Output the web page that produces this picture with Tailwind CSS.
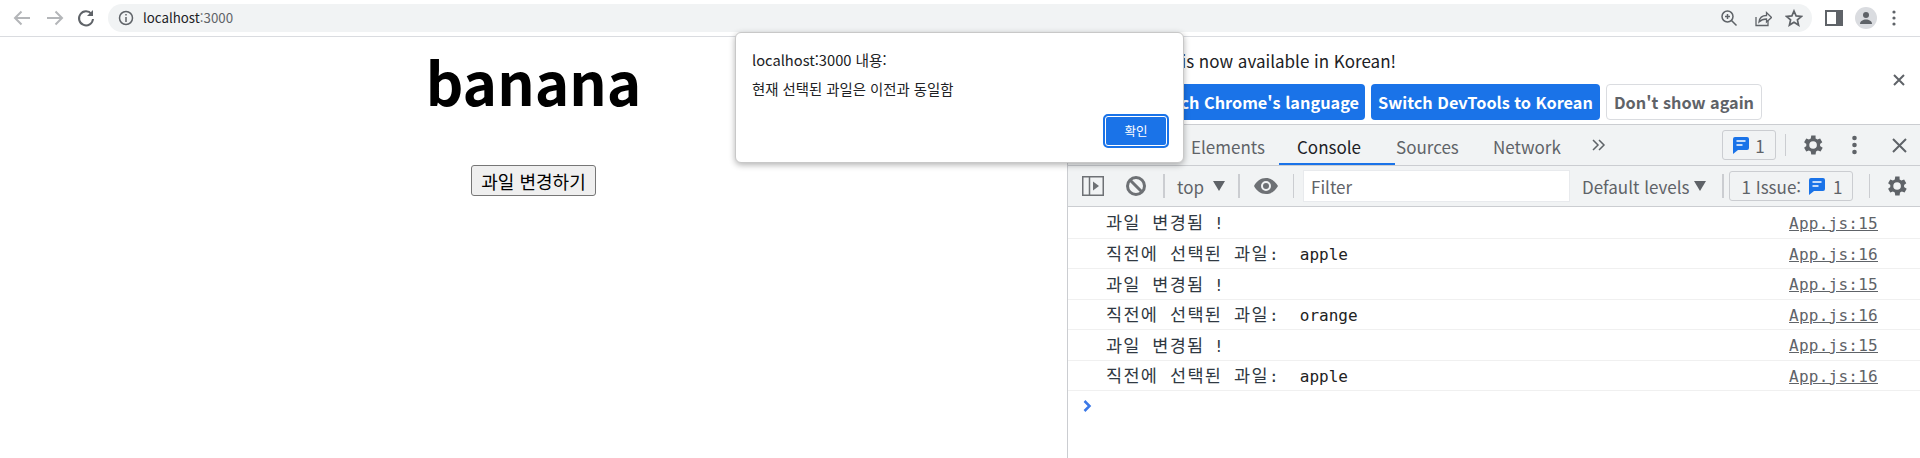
<!DOCTYPE html>
<html lang="ko">
<head>
    <meta charset="UTF-8">
    <title>localhost:3000</title>
    <script src="https://cdn.jsdelivr.net/npm/@tailwindcss/browser@4"></script>
</head>
<body class="relative w-[1920px] h-[458px] overflow-hidden bg-white font-['Noto_Sans_CJK_KR','Noto_Sans',sans-serif]">
    <!-- Browser toolbar -->
    <header class="flex items-center h-[37px] border-b border-[#dadce0] bg-white">
        <svg class="ml-[12px] w-[20px] h-[20px]" viewBox="0 0 20 20" fill="none" stroke="#b4b6b9" stroke-width="2"><path d="M18 10H3M9.500 3.500 3 10l6.500 6.500"/></svg>
        <svg class="ml-[13px] w-[20px] h-[20px]" viewBox="0 0 20 20" fill="none" stroke="#b4b6b9" stroke-width="2"><path d="M2 10h15M10.500 3.500 17 10l-6.500 6.500"/></svg>
        <svg class="ml-[11px] w-[20px] h-[20px]" viewBox="0 0 20 20" fill="none" stroke="#5f6368" stroke-width="2"><path d="M15.500 6A7 7 0 1 0 17 11"/><path d="M17 2v6h-6" fill="#5f6368" stroke="none"/></svg>
        <div class="ml-[12px] flex items-center w-[1704px] h-[28px] rounded-full bg-[#f1f3f4]">
            <svg class="ml-[10px] w-[16px] h-[16px]" viewBox="0 0 16 16" fill="none" stroke="#5f6368" stroke-width="1.500"><circle cx="8" cy="8" r="6.500"/><path d="M8 7v5"/><path d="M8 4v1.600"/></svg>
            <span class="ml-[9px] text-[13.300px] text-[#202124]">localhost<span class="text-[#5f6368]">:3000</span></span>
            <svg class="ml-auto w-[18px] h-[18px]" viewBox="0 0 18 18" fill="none" stroke="#5f6368" stroke-width="1.500"><circle cx="7.500" cy="7.500" r="5.500"/><path d="m11.500 11.500 5 5M5 7.500h5M7.500 5v5"/></svg>
            <svg class="ml-[16px] w-[18px] h-[18px]" viewBox="0 0 18 18" fill="none" stroke="#5f6368" stroke-width="1.300"><path d="M2 8v8.500h12V12"/><path d="M5 13c.5-4 3.500-6.500 7.500-6.500V3.500l5 5-5 4.500V10c-3 0-5.500 1-7.500 3Z"/></svg>
            <svg class="ml-[13px] mr-[9px] w-[18px] h-[18px]" viewBox="0 0 18 18" fill="none" stroke="#5f6368" stroke-width="1.700"><path d="m9 2 2.100 4.900 5.300.5-4 3.500 1.200 5.200L9 13.300l-4.600 2.800 1.200-5.200-4-3.500 5.300-.5Z"/></svg>
        </div>
        <svg class="ml-[13px] w-[18px] h-[16px]" viewBox="0 0 18 16"><rect width="18" height="16" fill="#5f6368"/><rect x="2" y="2" width="9" height="12" fill="#fff"/></svg>
        <div class="ml-[12px] flex items-center justify-center w-[22px] h-[22px] rounded-full bg-[#dadce0]">
            <svg class="w-[14px] h-[14px]" viewBox="0 0 14 14" fill="#5f6368"><circle cx="7" cy="4" r="3"/><path d="M1 13c0-3 3-4.500 6-4.500s6 1.500 6 4.500Z"/></svg>
        </div>
        <svg class="ml-[15px] w-[4px] h-[16px]" viewBox="0 0 4 16" fill="#5f6368"><circle cx="2" cy="2" r="1.600"/><circle cx="2" cy="8" r="1.600"/><circle cx="2" cy="14" r="1.600"/></svg>
    </header>

    <div class="flex h-[421px]">
        <!-- Page -->
        <main class="flex flex-col items-center w-[1068px] border-r border-[#cbcdd1] bg-white">
            <h1 class="mt-[2px] text-[58.500px] leading-[84px] font-bold text-black">banana</h1>
            <button class="mt-[42px] w-[125px] h-[31px] rounded-[3px] border border-[#767676] bg-[#efefef] text-[18px] leading-[26px] text-black">과일 변경하기</button>
        </main>

        <!-- DevTools -->
        <section class="flex-1 flex flex-col min-w-0">
            <div class="relative h-[88px] border-b border-[#cbcdd1] overflow-hidden">
                <p class="absolute right-[524px] top-[11px] text-[17px] leading-[26px] whitespace-nowrap text-[#202124]">DevTools is now available in Korean!</p>
                <div class="absolute right-[158px] top-[47px] flex gap-[6px] text-[16.300px] font-semibold whitespace-nowrap">
                    <span class="flex items-center justify-center px-[6px] pt-[1px] h-[36px] rounded-[4px] bg-[#1a73e8] text-white">Switch Chrome's language</span>
                    <span class="flex items-center justify-center w-[229px] pt-[1px] h-[36px] rounded-[4px] bg-[#1a73e8] text-white">Switch DevTools to Korean</span>
                    <span class="flex items-center justify-center w-[156px] pt-[1px] h-[36px] rounded-[4px] border border-[#dadce0] bg-white text-[#5f6368]">Don't show again</span>
                </div>
                <svg class="absolute right-[15px] top-[37px] w-[12px] h-[12px]" viewBox="0 0 12 12" stroke="#5f6368" stroke-width="2"><path d="m1 1 10 10M11 1 1 11"/></svg>
            </div>

            <!-- Tabs -->
            <div class="flex items-center h-[41px] pl-[123px] border-b border-[#cbcdd1] bg-[#f1f3f4] text-[17px] text-[#5f6368]">
                <span class="w-[106px] mt-[3px]">Elements</span>
                <span class="relative w-[99px] pt-[3px] leading-[37px] text-[#202124]">Console<span class="absolute left-[-18px] right-[1px] bottom-[0px] h-[2px] bg-[#1a73e8]"></span></span>
                <span class="w-[97px] mt-[3px]">Sources</span>
                <span class="w-[99px] mt-[3px]">Network</span>
                <svg class="w-[14px] h-[12px]" viewBox="0 0 14 12" fill="none" stroke="#5f6368" stroke-width="1.500"><path d="m1 1 5 5-5 5M7 1l5 5-5 5"/></svg>
                <div class="ml-[116px] flex items-center justify-center gap-[6px] w-[54px] h-[30px] rounded-[3px] border border-[#cbcdd1] text-[#5f6368]">
                    <svg class="w-[16px] h-[18px]" viewBox="0 0 16 18"><path d="M2 1h12a2 2 0 0 1 2 2v9a2 2 0 0 1-2 2H5l-5 4V3a2 2 0 0 1 2-2Z" fill="#1a73e8"/><path d="M3.500 5h9M3.500 9h6" stroke="#fff" stroke-width="1.500"/></svg>
                    <span class="mt-[2px]">1</span>
                </div>
                <span class="ml-[9px] w-px h-[22px] bg-[#cbcdd1]"></span>
                <svg class="ml-[13px] w-[26px] h-[26px]" viewBox="0 0 24 24" fill="#5f6368"><path d="M19.400 13c.1-.3.1-.7.1-1s0-.7-.1-1l2.100-1.600-2-3.500-2.500 1c-.5-.4-1.100-.7-1.700-1L15.300 3.300h-4l-.4 2.600c-.6.300-1.200.6-1.700 1l-2.500-1-2 3.500L6.800 11c-.1.3-.1.700-.1 1s0 .7.1 1l-2.100 1.600 2 3.500 2.500-1c.5.4 1.100.7 1.700 1l.4 2.600h4l.4-2.600c.6-.3 1.200-.6 1.700-1l2.500 1 2-3.500ZM13 15.500a3.500 3.500 0 1 1 0-7 3.500 3.500 0 0 1 0 7Z"/></svg>
                <svg class="ml-[27px] w-[5px] h-[20px]" viewBox="0 0 5 20" fill="#5f6368"><circle cx="2.500" cy="3" r="2.300"/><circle cx="2.500" cy="10" r="2.300"/><circle cx="2.500" cy="17" r="2.300"/></svg>
                <svg class="ml-[35px] w-[15px] h-[15px]" viewBox="0 0 15 15" stroke="#5f6368" stroke-width="2"><path d="m1 1 13 13M14 1 1 14"/></svg>
            </div>

            <!-- Console toolbar -->
            <div class="flex items-center h-[41px] border-b border-[#cbcdd1] bg-[#f1f3f4] text-[17px] text-[#5f6368]">
                <svg class="ml-[14px] w-[22px] h-[20px]" viewBox="0 0 22 20" fill="none" stroke="#6e7175" stroke-width="1.500"><rect x=".75" y=".75" width="20.500" height="18.500"/><path d="M7.500 1v18"/><path d="M11 5.500v9l6-4.500Z" fill="#6e7175" stroke="none"/></svg>
                <svg class="ml-[21px] w-[22px] h-[22px]" viewBox="0 0 22 22" fill="none" stroke="#6e7175" stroke-width="3"><circle cx="11" cy="11" r="8.500"/><path d="m5 5 12 12"/></svg>
                <span class="ml-[16px] w-[2px] h-[24px] bg-[#cbcdd1]"></span>
                <span class="ml-[12px] mt-[2px] w-[27px]">top</span>
                <svg class="ml-[9px] w-[12px] h-[10px]" viewBox="0 0 12 10" fill="#5f6368"><path d="M0 0h12L6 10Z"/></svg>
                <span class="ml-[13px] w-[2px] h-[24px] bg-[#cbcdd1]"></span>
                <svg class="ml-[14px] w-[24px] h-[16px]" viewBox="0 0 24 16" fill="#6e7175"><path d="M12 0C6.500 0 2.500 3.500 0 8c2.500 4.500 6.500 8 12 8s9.500-3.500 12-8c-2.500-4.500-6.500-8-12-8Zm0 13a5 5 0 1 1 0-10 5 5 0 0 1 0 10Z"/><circle cx="12" cy="8" r="3"/></svg>
                <span class="ml-[15px] w-px h-[24px] bg-[#cbcdd1]"></span>
                <div class="ml-[10px] flex items-center w-[265px] h-[30px] pl-[7px] pt-[2px] bg-white shadow-[0_0_0_1px_#e8eaed]">Filter</div>
                <span class="ml-[13px] mt-[2px] w-[106px] whitespace-nowrap">Default levels</span>
                <svg class="ml-[6px] w-[12px] h-[10px]" viewBox="0 0 12 10" fill="#5f6368"><path d="M0 0h12L6 10Z"/></svg>
                <span class="ml-[16px] w-[2px] h-[24px] bg-[#cbcdd1]"></span>
                <div class="ml-[5px] flex items-center justify-center gap-[8px] w-[124px] h-[30px] pl-[2px] rounded-[3px] border border-[#cbcdd1]">
                    <span class="mt-[2px]">1 Issue:</span>
                    <svg class="w-[16px] h-[18px]" viewBox="0 0 16 18"><path d="M2 1h12a2 2 0 0 1 2 2v9a2 2 0 0 1-2 2H5l-5 4V3a2 2 0 0 1 2-2Z" fill="#1a73e8"/><path d="M3.500 5h9M3.500 9h6" stroke="#fff" stroke-width="1.500"/></svg>
                    <span class="mt-[2px]">1</span>
                </div>
                <span class="ml-[16px] w-px h-[24px] bg-[#cbcdd1]"></span>
                <svg class="ml-[13px] w-[26px] h-[26px]" viewBox="0 0 24 24" fill="#5f6368"><path d="M19.400 13c.1-.3.1-.7.1-1s0-.7-.1-1l2.100-1.600-2-3.500-2.500 1c-.5-.4-1.100-.7-1.700-1L15.300 3.300h-4l-.4 2.600c-.6.300-1.200.6-1.700 1l-2.500-1-2 3.500L6.800 11c-.1.3-.1.700-.1 1s0 .7.1 1l-2.100 1.600 2 3.500 2.500-1c.5.4 1.100.7 1.700 1l.4 2.600h4l.4-2.600c.6-.3 1.200-.6 1.700-1l2.500 1 2-3.500ZM13 15.500a3.500 3.500 0 1 1 0-7 3.500 3.500 0 0 1 0 7Z"/></svg>
            </div>

            <!-- Console messages -->
            <div class="flex-1 font-['DejaVu_Sans_Mono','Noto_Sans_CJK_KR',monospace] text-[16px] text-[#303942]">
                <div class="flex items-center justify-between h-[32px] pt-[2px] pl-[38px] pr-[42px] border-b border-[#f0f0f0]"><span class="whitespace-pre"><span class="text-[17.500px] tracking-[1.200px]">과일 변경됨</span> !</span><a class="text-[#5f6368] underline tracking-[0.250px]">App.js:15</a></div>
                <div class="flex items-center justify-between h-[30px] pt-[2px] pl-[38px] pr-[42px] border-b border-[#f0f0f0]"><span class="whitespace-pre"><span class="text-[17.500px] tracking-[1.300px]">직전에 선택된 과일</span>:  <span class="ml-[2px] text-[#222]">apple</span></span><a class="text-[#5f6368] underline tracking-[0.250px]">App.js:16</a></div>
                <div class="flex items-center justify-between h-[31px] pt-[2px] pl-[38px] pr-[42px] border-b border-[#f0f0f0]"><span class="whitespace-pre"><span class="text-[17.500px] tracking-[1.200px]">과일 변경됨</span> !</span><a class="text-[#5f6368] underline tracking-[0.250px]">App.js:15</a></div>
                <div class="flex items-center justify-between h-[30px] pt-[2px] pl-[38px] pr-[42px] border-b border-[#f0f0f0]"><span class="whitespace-pre"><span class="text-[17.500px] tracking-[1.300px]">직전에 선택된 과일</span>:  <span class="ml-[2px] text-[#222]">orange</span></span><a class="text-[#5f6368] underline tracking-[0.250px]">App.js:16</a></div>
                <div class="flex items-center justify-between h-[31px] pt-[2px] pl-[38px] pr-[42px] border-b border-[#f0f0f0]"><span class="whitespace-pre"><span class="text-[17.500px] tracking-[1.200px]">과일 변경됨</span> !</span><a class="text-[#5f6368] underline tracking-[0.250px]">App.js:15</a></div>
                <div class="flex items-center justify-between h-[30px] pt-[2px] pl-[38px] pr-[42px] border-b border-[#f0f0f0]"><span class="whitespace-pre"><span class="text-[17.500px] tracking-[1.300px]">직전에 선택된 과일</span>:  <span class="ml-[2px] text-[#222]">apple</span></span><a class="text-[#5f6368] underline tracking-[0.250px]">App.js:16</a></div>
                <div class="flex items-center h-[30px] pl-[15px]">
                    <svg class="w-[9px] h-[12px]" viewBox="0 0 9 12" fill="none" stroke="#3b78e7" stroke-width="2.500"><path d="m1.500 1 5 5-5 5"/></svg>
                </div>
            </div>
        </section>
    </div>

    <!-- alert dialog -->
    <div class="absolute left-[735px] top-[32px] w-[449px] h-[131px] rounded-[6px] border border-[#c8c8c8] bg-white shadow-[0_2px_6px_rgba(0,0,0,0.3)]">
        <p class="mt-[17px] ml-[16px] text-[14.700px] leading-[20px] text-[#202124]">localhost:3000 내용:</p>
        <p class="mt-[10px] ml-[16px] text-[14.400px] leading-[18px] text-[#202124]">현재 선택된 과일은 이전과 동일함</p>
        <button class="absolute left-[367px] top-[81px] w-[66px] h-[34px] rounded-[5px] border-2 border-[#1a73e8] outline outline-1 -outline-offset-3 outline-white bg-[#1a73e8] text-[12.500px] text-white">확인</button>
    </div>
</body>
</html>
